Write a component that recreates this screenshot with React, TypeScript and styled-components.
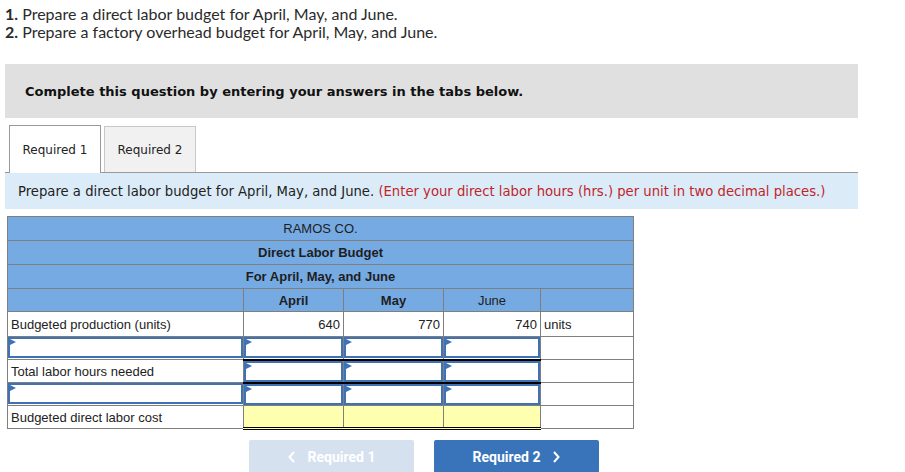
import React from "react";
import styled, { createGlobalStyle, css } from "styled-components";

const Global = createGlobalStyle`
  html, body { margin: 0; padding: 0; background: #fff; }
  body { width: 905px; height: 472px; overflow: hidden; }
`;

const Page = styled.div`
  padding: 5px 5px 0 5px;
  width: 853px;
`;

const Intro = styled.div`
  font-family: Lato, "Open Sans", sans-serif;
  font-size: 16px;
  line-height: 18px;
  color: #2b2b2b;
  p { margin: 0; }
  b { font-weight: 700; }
`;

const Banner = styled.div`
  margin-top: 23px;
  height: 54px;
  background: #e0e0e0;
  display: flex;
  align-items: center;
  padding-left: 20px;
  font-family: "DejaVu Sans", Verdana, sans-serif;
  font-weight: 700;
  font-size: 13px;
  color: #111;
`;

const Tabs = styled.div`
  margin-top: 7px;
  display: flex;
  align-items: flex-end;
  padding-left: 4px;
  border-bottom: 1px solid #999;
  height: 47px;
`;

const Tab = styled.div<{ $active?: boolean }>`
  width: 92px;
  height: 46px;
  box-sizing: border-box;
  display: flex;
  align-items: center;
  justify-content: center;
  font-family: "DejaVu Sans", Verdana, sans-serif;
  font-size: 12px;
  color: #222;
  border: 1px solid #aaa;
  border-bottom: none;
  margin-right: 3px;
  ${(p) =>
    p.$active
      ? css`
          background: #fff;
          height: 48px;
          margin-bottom: -1px;
          border-color: #999;
        `
      : css`
          background: #f1f1f1;
          border-color: #c8c8c8;
        `}
`;

const Instruction = styled.div`
  height: 36px;
  background: #dbecf8;
  display: flex;
  align-items: center;
  padding-left: 13px;
  font-family: "DejaVu Sans", Verdana, sans-serif;
  font-size: 13.2px;
  color: #222;
  span { color: #c0252b; }
`;

const Table = styled.table`
  margin: 7px 0 0 2px;
  border-collapse: collapse;
  table-layout: fixed;
  width: 626px;
  font-family: "Liberation Sans", Arial, sans-serif;
  font-size: 13px;
  color: #222;
`;

const Row = styled.tr<{ $h: number }>`
  height: ${(p) => p.$h}px;
`;

const HeadCell = styled.td<{ $light?: boolean }>`
  background: #76aae3;
  border: 1px solid #7f7f7f;
  padding: 0;
  text-align: center;
  font-weight: ${(p) => (p.$light ? 400 : 700)};
  font-size: 13px;
  color: #1e1e1e;
`;

const Cell = styled.td<{ $align?: string; $yellow?: boolean; $under?: boolean }>`
  border: 1px solid #7f7f7f;
  padding: 0 3px;
  text-align: ${(p) => p.$align || "left"};
  background: ${(p) => (p.$yellow ? "#ffffb0" : "#fff")};
  font-size: 13px;
  ${(p) =>
    p.$under &&
    css`
      border-bottom: 3px double #000;
    `}
`;

const InputCell = styled.td<{ $under?: boolean }>`
  border: 1px solid #7f7f7f;
  padding: 0;
  vertical-align: top;
  ${(p) =>
    p.$under &&
    css`
      border-bottom: 2px solid #000;
    `}
`;

const InputBox = styled.div`
  box-sizing: border-box;
  height: 21px;
  border: 2px solid #3f72b5;
  background: #fff;
  position: relative;
  &::before {
    content: "";
    position: absolute;
    left: 0;
    top: 0;
    border-top: 3px solid transparent;
    border-bottom: 3px solid transparent;
    border-left: 6px solid #3f72b5;
  }
`;

const Buttons = styled.div`
  display: flex;
  gap: 20px;
  margin: 10px 0 0 244px;
`;

const NavButton = styled.div<{ $disabled?: boolean }>`
  width: 165px;
  height: 33px;
  display: flex;
  align-items: center;
  justify-content: center;
  gap: 12px;
  font-family: Roboto, "Liberation Sans", sans-serif;
  font-weight: 700;
  font-size: 14px;
  color: #fff;
  background: ${(p) => (p.$disabled ? "#d6e1ef" : "#3974bb")};
  border-radius: 2px;
  svg { display: block; }
`;

const Chevron = ({ dir }: { dir: "left" | "right" }) => (
  <svg width="8" height="12" viewBox="0 0 8 12">
    <path
      d={dir === "left" ? "M6 1 L1.5 6 L6 11" : "M2 1 L6.5 6 L2 11"}
      fill="none"
      stroke="#fff"
      strokeWidth="2"
    />
  </svg>
);

export default function App() {
  return (
    <>
      <Global />
      <Page>
        <Intro>
          <p><b>1.</b> Prepare a direct labor budget for April, May, and June.</p>
          <p><b>2.</b> Prepare a factory overhead budget for April, May, and June.</p>
        </Intro>
        <Banner>Complete this question by entering your answers in the tabs below.</Banner>
        <Tabs>
          <Tab $active>Required 1</Tab>
          <Tab>Required 2</Tab>
        </Tabs>
        <Instruction>
          Prepare a direct labor budget for April, May, and June.&nbsp;
          <span>(Enter your direct labor hours (hrs.) per unit in two decimal places.)</span>
        </Instruction>
        <Table>
          <colgroup>
            <col style={{ width: 236 }} />
            <col style={{ width: 100 }} />
            <col style={{ width: 100 }} />
            <col style={{ width: 97 }} />
            <col style={{ width: 93 }} />
          </colgroup>
          <tbody>
            <Row $h={24}><HeadCell colSpan={5} $light>RAMOS CO.</HeadCell></Row>
            <Row $h={24}><HeadCell colSpan={5}>Direct Labor Budget</HeadCell></Row>
            <Row $h={24}><HeadCell colSpan={5}>For April, May, and June</HeadCell></Row>
            <Row $h={23}>
              <HeadCell />
              <HeadCell>April</HeadCell>
              <HeadCell>May</HeadCell>
              <HeadCell $light>June</HeadCell>
              <HeadCell />
            </Row>
            <Row $h={25}>
              <Cell>Budgeted production (units)</Cell>
              <Cell $align="right">640</Cell>
              <Cell $align="right">770</Cell>
              <Cell $align="right">740</Cell>
              <Cell>units</Cell>
            </Row>
            <Row $h={23}>
              <InputCell><InputBox /></InputCell>
              <InputCell $under><InputBox /></InputCell>
              <InputCell $under><InputBox /></InputCell>
              <InputCell $under><InputBox /></InputCell>
              <Cell />
            </Row>
            <Row $h={23}>
              <Cell>Total labor hours needed</Cell>
              <InputCell $under><InputBox /></InputCell>
              <InputCell $under><InputBox /></InputCell>
              <InputCell $under><InputBox /></InputCell>
              <Cell />
            </Row>
            <Row $h={23}>
              <InputCell><InputBox /></InputCell>
              <InputCell><InputBox /></InputCell>
              <InputCell><InputBox /></InputCell>
              <InputCell><InputBox /></InputCell>
              <Cell />
            </Row>
            <Row $h={23}>
              <Cell>Budgeted direct labor cost</Cell>
              <Cell $yellow $under />
              <Cell $yellow $under />
              <Cell $yellow $under />
              <Cell />
            </Row>
          </tbody>
        </Table>
        <Buttons>
          <NavButton $disabled><Chevron dir="left" />Required 1</NavButton>
          <NavButton>Required 2<Chevron dir="right" /></NavButton>
        </Buttons>
      </Page>
    </>
  );
}
